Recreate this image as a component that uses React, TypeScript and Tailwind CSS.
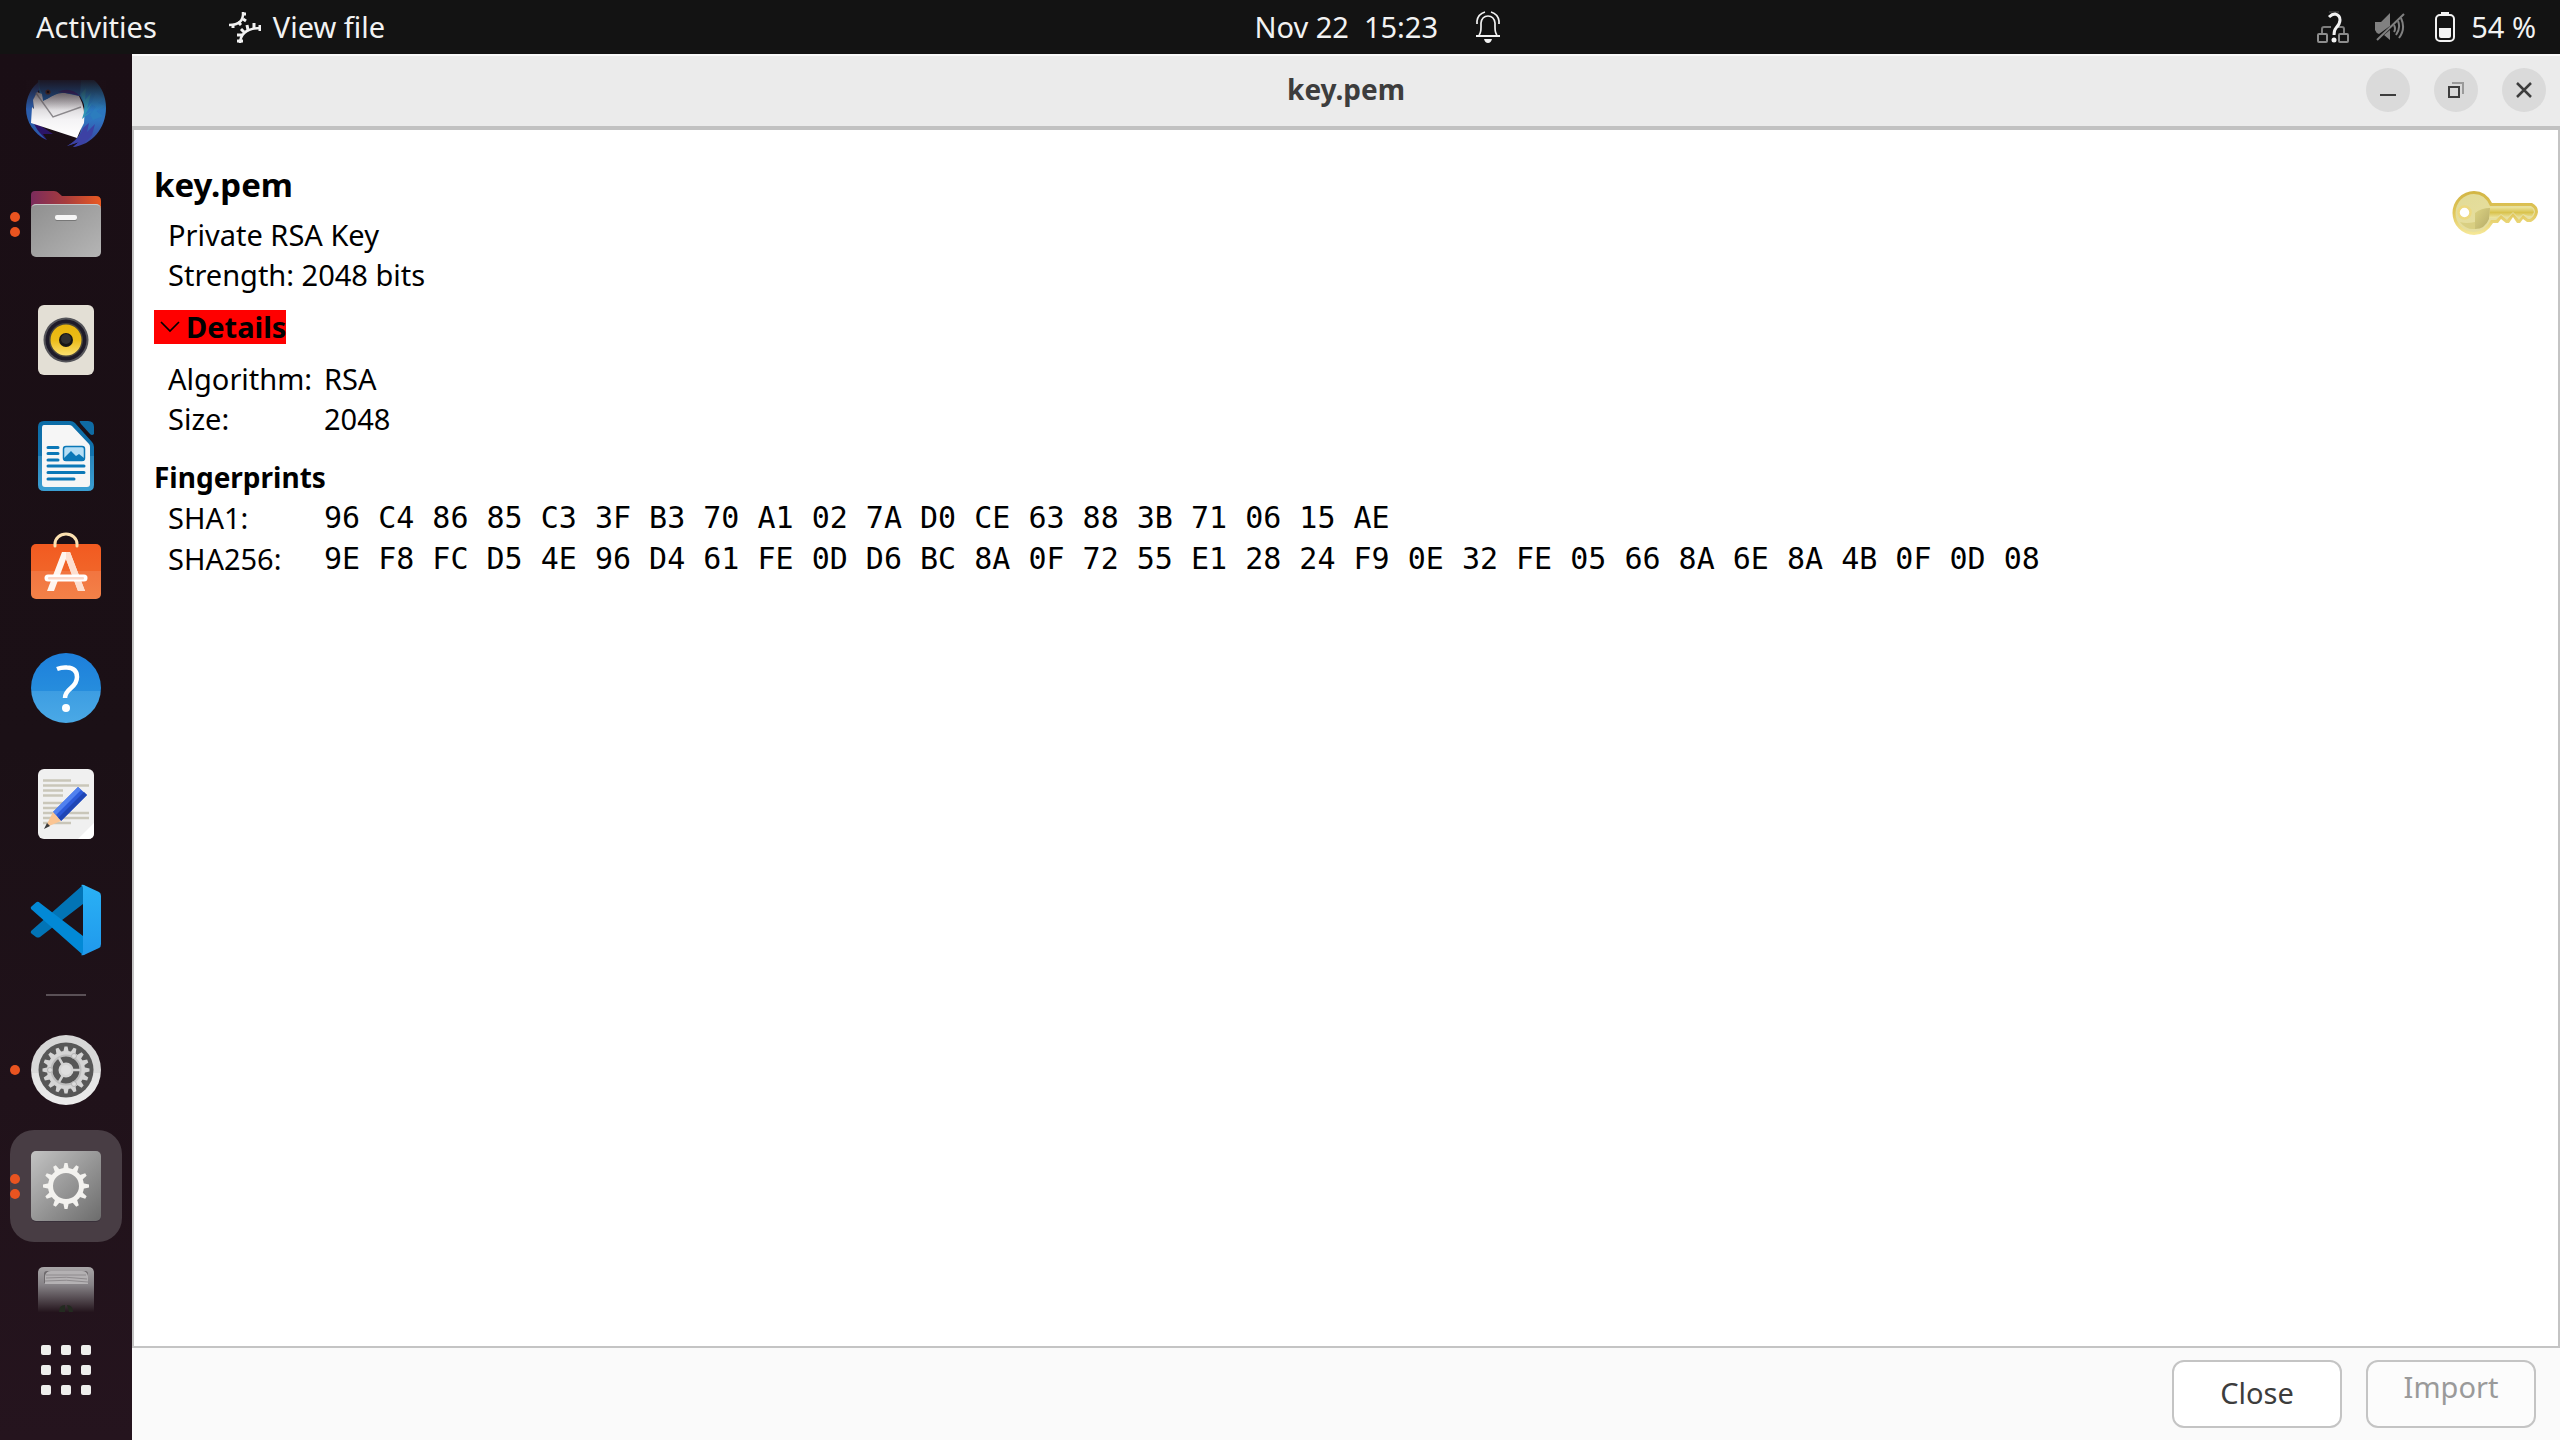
import type { ReactNode } from "react";

interface DockItemProps {
  label: string;
  windows?: number;
  active?: boolean;
  children: ReactNode;
}

interface DetailRow {
  label: string;
  value: string;
}

const details: DetailRow[] = [
  { label: "Algorithm:", value: "RSA" },
  { label: "Size:", value: "2048" },
];

const fingerprints: DetailRow[] = [
  {
    label: "SHA1:",
    value: "96 C4 86 85 C3 3F B3 70 A1 02 7A D0 CE 63 88 3B 71 06 15 AE",
  },
  {
    label: "SHA256:",
    value:
      "9E F8 FC D5 4E 96 D4 61 FE 0D D6 BC 8A 0F 72 55 E1 28 24 F9 0E 32 FE 05 66 8A 6E 8A 4B 0F 0D 08",
  },
];

function DockItem({ label, windows = 0, active, children }: DockItemProps) {
  return (
    <li className="relative flex h-[116px] items-center justify-center">
      <button
        type="button"
        aria-label={label}
        className={`flex size-28 items-center justify-center rounded-3xl ${
          active ? "bg-[#483d44]" : ""
        }`}
      >
        {children}
      </button>
      {windows > 0 && (
        <span className="absolute inset-y-0 left-[10px] flex flex-col justify-center gap-[5px]">
          {Array.from({ length: windows }, (_, i) => (
            <span key={i} className="size-[10px] rounded-full bg-[#e95420]" />
          ))}
        </span>
      )}
    </li>
  );
}

function Teeth({ count, inner, outer, width, fill }: {
  count: number;
  inner: number;
  outer: number;
  width: number;
  fill: string;
}) {
  const half = width / 2;
  return (
    <g fill={fill}>
      {Array.from({ length: count }, (_, i) => (
        <path
          key={i}
          d={`M${40 - half - 1} ${40 - inner} L${40 - half + 0.5} ${40 - outer} H${40 + half - 0.5} L${40 + half + 1} ${40 - inner} Z`}
          transform={`rotate(${(360 / count) * i} 40 40)`}
        />
      ))}
    </g>
  );
}

function MailIcon() {
  return (
    <svg viewBox="0 0 80 80" className="size-20">
      <defs>
        <linearGradient id="mail-wing" x1="0" y1="0" x2="0" y2="1">
          <stop offset="0" stopColor="#1f7fb8" />
          <stop offset="0.6" stopColor="#2f74c0" />
          <stop offset="1" stopColor="#3a3f9e" />
        </linearGradient>
        <linearGradient id="mail-paper" x1="0" y1="0" x2="0" y2="1">
          <stop offset="0" stopColor="#b9b5b9" />
          <stop offset="0.6" stopColor="#f4f3f5" />
          <stop offset="1" stopColor="#ffffff" />
        </linearGradient>
        <linearGradient id="mail-fade" x1="0" y1="12" x2="0" y2="42" gradientUnits="userSpaceOnUse">
          <stop offset="0" stopColor="#1b0f16" stopOpacity="0.9" />
          <stop offset="1" stopColor="#1b0f16" stopOpacity="0" />
        </linearGradient>
        <clipPath id="mail-clip">
          <rect y="12" width="80" height="68" />
        </clipPath>
      </defs>
      <g clipPath="url(#mail-clip)">
        <path d="M5 55 C8 64 14 70 21 72 L17 66 L27 66 L9 54 Z" fill="#2b1468" />
        <path d="M15 12 C5 19 0 29 0 41 C0 54 8 66 21 72 C13 65 8 58 7 52 L8 30 L18 14 Z" fill="#2a5cab" />
        <path
          d="M12 12 H68 C76 19 80 29 80 40 C80 60 66 77 47 79 L53 74 L41 78 C48 74 52 70 54 65 L60 40 L54 28 L14 30 Z"
          fill="url(#mail-wing)"
        />
        <path d="M57 60 L63 55 L61 64 L69 56 L66 67 C61 74 53 78 47 79 L53 74 L41 78 C49 74 54 68 57 60 Z" fill="#3c41a4" />
        <path d="M11 24 L16 26 L18 32 L34 24 L53 28 Q60 41 58 55 L54 63 L51 70 L5 55 L6 39 L8 41 L7 32 Z" fill="url(#mail-paper)" />
        <path d="M10 25 L27 49 L55 39" fill="none" stroke="#8b888c" strokeWidth="1.4" />
        <path d="M14 12 H55 L54 28 C47 25 41 25 36 25 C27 26 24 30 17 33 L16 25 C13 21 13 16 14 12 Z" fill="#1f5899" />
        <path d="M32 24 Q44 18 54 28 Q44 25 32 24 Z" fill="#3b2c82" />
        <path d="M55 26 L60 20 L59 32 L65 25 L61 41 L67 33 L59 47 L66 43 L56 51 Q61 40 55 26 Z" fill="#2f93b4" />
        <path d="M70 24 L78 31 L72 35 L79 38 L70 43 L77 48 L67 52 L64 47 L70 39 L65 36 Z" fill="#2c80bd" opacity="0.7" />
        <circle cx="22" cy="24" r="2.6" fill="#5a3429" />
        <circle cx="22" cy="24" r="1.3" fill="#0b0a12" />
        <rect y="12" width="80" height="32" fill="url(#mail-fade)" />
      </g>
    </svg>
  );
}

function FilesIcon() {
  return (
    <svg viewBox="0 0 80 80" className="size-20">
      <defs>
        <linearGradient id="files-back" x1="0" y1="0" x2="1" y2="0">
          <stop offset="0" stopColor="#7b2b5c" />
          <stop offset="0.5" stopColor="#a83c3c" />
          <stop offset="1" stopColor="#ea5a22" />
        </linearGradient>
        <linearGradient id="files-front" x1="0" y1="0" x2="1" y2="1">
          <stop offset="0" stopColor="#8f8f8f" />
          <stop offset="1" stopColor="#b5b5b5" />
        </linearGradient>
      </defs>
      <path d="M5 11 Q5 7 9 7 H28 Q31 7 32 8.500 L36 12 H70 Q75 12 75 17 V40 H5 Z" fill="url(#files-back)" />
      <rect x="5" y="20" width="70" height="53" rx="5" fill="url(#files-front)" />
      <path d="M6 22.500 Q7 20.500 10 20.500 H70 Q73 20.500 74 22.500" fill="none" stroke="#c8c8c8" />
      <rect x="29" y="32" width="22" height="5" rx="2" fill="#777" />
      <rect x="29" y="31" width="22" height="5" rx="2" fill="#f6f6f6" />
    </svg>
  );
}

function MusicIcon() {
  return (
    <svg viewBox="0 0 80 80" className="size-20">
      <defs>
        <linearGradient id="music-cone" x1="0" y1="0" x2="0" y2="1">
          <stop offset="0" stopColor="#e8b50c" />
          <stop offset="0.5" stopColor="#ecbc18" />
          <stop offset="1" stopColor="#fbe070" />
        </linearGradient>
      </defs>
      <rect x="12" y="5" width="56" height="70" rx="6" fill="#e3dfd5" />
      <circle cx="40" cy="40" r="22.500" fill="#55555a" />
      <circle cx="40" cy="40" r="20.500" fill="#1e1b29" />
      <circle cx="40" cy="40" r="17" fill="#47443c" />
      <circle cx="40" cy="40" r="15.500" fill="url(#music-cone)" />
      <circle cx="40" cy="40" r="7" fill="#161616" />
      <circle cx="40" cy="39" r="5" fill="#303030" />
    </svg>
  );
}

function WriterIcon() {
  return (
    <svg viewBox="0 0 80 80" className="size-20">
      <defs>
        <linearGradient id="writer-frame" x1="0" y1="0" x2="0" y2="1">
          <stop offset="0" stopColor="#0c6ca6" />
          <stop offset="0.5" stopColor="#1273ae" />
          <stop offset="0.5" stopColor="#2a86bb" />
          <stop offset="1" stopColor="#3b9fd3" />
        </linearGradient>
      </defs>
      <path d="M18 5 H44 Q47 5 49 7 L66 26 Q68 28 68 31 V69 Q68 75 62 75 H18 Q12 75 12 69 V11 Q12 5 18 5 Z" fill="url(#writer-frame)" />
      <path d="M18 9 H43 Q45 9 46 10 L63 28 Q64 29 64 31 V68 Q64 71 61 71 H19 Q16 71 16 68 V12 Q16 9 18 9 Z" fill="#f6f6f6" />
      <path d="M54 5 H62 Q68 5 68 11 V18 Q66 20 64 18 L55 8 Q53 5 54 5 Z" fill="#0f6ba3" />
      <path d="M22 31.500 H32 M22 37.500 H32 M22 44 H32 M22 50 H58 M22 56.500 H58 M22 63 H48" stroke="#0b78b7" strokeWidth="3" strokeLinecap="round" />
      <rect x="37.500" y="30.500" width="21" height="14" rx="2.500" fill="#b5def5" stroke="#0b78b7" strokeWidth="1.500" />
      <path d="M38 42 L45 35 L50 40 L53 38 L58 42 V45 H38 Z" fill="#0b78b7" />
    </svg>
  );
}

function SoftwareIcon() {
  return (
    <svg viewBox="0 0 80 80" className="size-20">
      <defs>
        <linearGradient id="software-bag" x1="0" y1="0" x2="0" y2="1">
          <stop offset="0" stopColor="#f25a20" />
          <stop offset="0.5" stopColor="#f16529" />
          <stop offset="0.5" stopColor="#f27540" />
          <stop offset="1" stopColor="#f38148" />
        </linearGradient>
      </defs>
      <rect x="5" y="12" width="70" height="55" rx="5" fill="url(#software-bag)" />
      <path d="M29 14 V12 A11 10 0 0 1 51 12 V14" fill="none" stroke="#fbe0b0" strokeWidth="3" strokeLinecap="round" />
      <path d="M36 20 H44 L59 59 H52 L40 27 L28 59 H21 Z" fill="#fff5ef" />
      <path d="M40 20 H44 L59 59 H52 L40 27 Z" fill="#fddfd0" />
      <rect x="18.500" y="42.500" width="43" height="7" rx="3.500" fill="#fff" />
      <rect x="22" y="45" width="36" height="2.500" rx="1" fill="#fbd8ca" />
    </svg>
  );
}

function HelpIcon() {
  return (
    <svg viewBox="0 0 80 80" className="size-20">
      <defs>
        <linearGradient id="help-disc" x1="0" y1="0" x2="0" y2="1">
          <stop offset="0" stopColor="#1d7fdb" />
          <stop offset="0.54" stopColor="#268ddd" />
          <stop offset="0.54" stopColor="#3d9de2" />
          <stop offset="1" stopColor="#4aa9e6" />
        </linearGradient>
      </defs>
      <circle cx="40" cy="40" r="35" fill="url(#help-disc)" />
      <path d="M31 21 Q36 19 41 19.500 Q51 20 51 29 Q51 35 45 40 Q39 45 39 50" fill="none" stroke="#fff" strokeWidth="4.500" />
      <circle cx="40" cy="60" r="4" fill="#fff" />
    </svg>
  );
}

function EditorIcon() {
  return (
    <svg viewBox="0 0 80 80" className="size-20">
      <rect x="12" y="5" width="56" height="70" rx="6" fill="#f0f0f0" />
      <path d="M52 75 L68 59 V69 Q68 75 62 75 Z" fill="#fff" />
      <path d="M17 16.500 H45 M17 21.500 H63 M17 26.500 H37 M17 31.500 H37 M17 39 H43 M17 44 H37 M17 49 H63 M17 54 H63 M17 59 H45" stroke="#c9c6b9" strokeWidth="2.500" />
      <path d="M27 48 L52 23 L61 31 L35 57 Z" fill="#2b59d8" />
      <path d="M27 48 L52 23 L55 26 L30 51 Z" fill="#5181ef" />
      <path d="M32 54 L58 28 L61 31 L35 57 Z" fill="#1f46b5" />
      <path d="M27 48 L35 57 L23 62 L21 60 Z" fill="#fbc593" />
      <path d="M21 59 L24 62 L18 65 Z" fill="#3b3b3b" />
    </svg>
  );
}

function CodeIcon() {
  return (
    <svg viewBox="0 0 80 80" className="size-20">
      <defs>
        <linearGradient id="code-side" x1="0" y1="0" x2="0" y2="1">
          <stop offset="0" stopColor="#2ab1f5" />
          <stop offset="1" stopColor="#2099ec" />
        </linearGradient>
      </defs>
      <path d="M57 5 L5 51 Q4 53 6 54 L10 57 Q12 58 14 57 L57 24 Z" fill="#0274b6" />
      <path d="M57 75 L5 29 Q4 27 6 26 L10 22.500 Q12 21 14 23 L57 56 Z" fill="#0289d6" />
      <path d="M55 5 Q57 4 60 6 L73 12 Q75 13 75 16 V64 Q75 67 73 68 L60 74 Q57 76 55 75 Q57 74 57 72 V8 Q57 6 55 5 Z" fill="url(#code-side)" />
    </svg>
  );
}

function SettingsIcon() {
  return (
    <svg viewBox="0 0 80 80" className="size-20">
      <defs>
        <linearGradient id="settings-ring" x1="0" y1="0" x2="0" y2="1">
          <stop offset="0" stopColor="#d6d6d6" />
          <stop offset="0.55" stopColor="#d9d9d9" />
          <stop offset="0.55" stopColor="#e4e4e4" />
          <stop offset="1" stopColor="#ececec" />
        </linearGradient>
      </defs>
      <circle cx="40" cy="40" r="35" fill="url(#settings-ring)" />
      <circle cx="40" cy="40" r="27.500" fill="#575757" />
      <Teeth count={16} inner={17} outer={23.5} width={4} fill="#d4d4d4" />
      <circle cx="40" cy="40" r="16.500" fill="none" stroke="#d4d4d4" strokeWidth="5" />
      <circle cx="40" cy="40" r="14.500" fill="none" stroke="#bdbdbd" strokeWidth="2" />
      <path d="M40 40 H54 M40 40 L33 28 M40 40 L33 52" stroke="#d0d0d0" strokeWidth="2.500" />
      <circle cx="40" cy="40" r="7.500" fill="#d4d4d4" />
      <circle cx="40" cy="40" r="5" fill="#dedede" />
      <g fill="#dcdcdc" stroke="#b4b4b4">
        <circle cx="24" cy="40" r="2.500" />
        <circle cx="48" cy="26" r="2.500" />
        <circle cx="48" cy="54" r="2.500" />
      </g>
    </svg>
  );
}

function ViewerIcon() {
  return (
    <svg viewBox="0 0 80 80" className="size-20">
      <defs>
        <linearGradient id="viewer-tile" x1="0" y1="0" x2="1" y2="1">
          <stop offset="0" stopColor="#c3c3c3" />
          <stop offset="1" stopColor="#6c6c6c" />
        </linearGradient>
      </defs>
      <rect x="5" y="6" width="70" height="70" rx="5" fill="#39303a" />
      <rect x="5" y="5" width="70" height="70" rx="5" fill="url(#viewer-tile)" />
      <Teeth count={12} inner={16} outer={23} width={4} fill="#f3f2ef" />
      <circle cx="40" cy="40" r="15.500" fill="none" stroke="#f3f2ef" strokeWidth="5" />
    </svg>
  );
}

function TrashIcon() {
  return (
    <svg viewBox="0 0 80 80" className="size-20">
      <defs>
        <linearGradient id="trash-body" x1="0" y1="5" x2="0" y2="50" gradientUnits="userSpaceOnUse">
          <stop offset="0" stopColor="#a9a6a8" />
          <stop offset="0.4" stopColor="#868286" />
          <stop offset="1" stopColor="#24151d" />
        </linearGradient>
      </defs>
      <path d="M12 50 V11 Q12 5 18 5 H62 Q68 5 68 11 V50 Z" fill="url(#trash-body)" />
      <path d="M18 21 V12 Q18 9 21 9 H59 Q62 9 62 12 V21 Z" fill="#6d696c" />
      <path d="M19 22 V14 Q20 9 25 9 H56 Q61 9 62 14 V22 Z" fill="#b4b1b3" />
      <path d="M20 13 H60 M20 16 Q40 14 61 17 M19 19 Q40 17 62 20" fill="none" stroke="#8e8a8d" />
      <path d="M33 50 Q33 43 39 43 L39 50 Z M41 43 Q47 43 47 50 H43 Z" fill="#232a20" />
    </svg>
  );
}

function GearsIcon() {
  return (
    <svg viewBox="0 0 32 32" className="size-8" fill="none" stroke="#f2f2f2">
      <path d="M14 1 Q15 14 0 14" strokeWidth="2.500" />
      <path d="M14 3 H17 M14 8 L17 10 M9 11 L12 14 M4 13 V17" strokeWidth="3" />
      <path d="M11 32 Q12 17 32 17" strokeWidth="2.500" />
      <path d="M8 30 H14 M8 24 H13 M12 18 L15 21 M18 14 L19 19 M25 12 V18 M31 14 V20" strokeWidth="3" />
    </svg>
  );
}

function BellIcon() {
  return (
    <svg viewBox="0 0 24 32" className="h-8 w-6" fill="none" stroke="#f2f2f2" strokeWidth="1.700">
      <path d="M1 13 V10 Q2 3 9 1 M23 13 V10 Q22 3 15 1" />
      <path d="M3 24 Q5 22 5 16 V12 Q6 5 12 5 Q18 5 19 12 V16 Q19 22 21 24" />
      <path d="M0 25 H24" strokeWidth="2" />
      <path d="M8 28 H16 Q15 32 12 32 Q9 32 8 28 Z" fill="#f2f2f2" stroke="none" />
    </svg>
  );
}

function NetworkIcon() {
  return (
    <svg viewBox="0 0 32 32" className="size-8" fill="none">
      <path d="M5 22 V18 Q5 16 7 16 H14 M20 16 H25 Q27 16 27 18 V22" stroke="#7d7d7d" strokeWidth="2" />
      <rect x="1" y="23" width="9" height="8" rx="1" stroke="#8d8d8d" strokeWidth="2" />
      <rect x="22" y="23" width="9" height="8" rx="1" stroke="#8d8d8d" strokeWidth="2" />
      <path d="M12 1 H22" stroke="#555" />
      <path d="M12 6 Q15 3 18 3 Q23 4 23 9 Q23 13 19 17 Q17 19 17 24" stroke="#f2f2f2" strokeWidth="3" />
      <circle cx="17" cy="29" r="2.500" fill="#f2f2f2" />
    </svg>
  );
}

function MutedIcon() {
  return (
    <svg viewBox="0 0 30 30" className="size-[30px]" fill="none" stroke="#808080" strokeWidth="2">
      <path d="M0 10 H6 L15 1 V14 L4 22 Q1 21 0 18 Z M9 23 L15 18 V28 Z" fill="#808080" stroke="none" />
      <path d="M2 28 L29 2" />
      <path d="M19 13 Q21 17 19 20 M23 9 Q26 16 21 23 M26 6 Q31 17 24 26" />
    </svg>
  );
}

function BatteryIcon() {
  return (
    <svg viewBox="0 0 20 30" className="h-[30px] w-5">
      <path d="M6 0 H14 V3 H6 Z" fill="#f2f2f2" />
      <rect x="1" y="3" width="18" height="26" rx="4" fill="none" stroke="#f2f2f2" strokeWidth="2" />
      <path d="M4 16 H16 V24 Q16 26 14 26 H6 Q4 26 4 24 Z" fill="#f2f2f2" />
    </svg>
  );
}

function KeyIcon() {
  return (
    <svg viewBox="0 0 86 44" className="h-11 w-[86px] shrink-0" role="img" aria-label="Key">
      <defs>
        <linearGradient id="key-edge" x1="0" y1="0" x2="0" y2="1">
          <stop offset="0" stopColor="#d2b544" />
          <stop offset="0.5" stopColor="#e0c65a" />
          <stop offset="1" stopColor="#f6e99b" />
        </linearGradient>
        <linearGradient id="key-shaft" x1="0" y1="0" x2="0" y2="1">
          <stop offset="0" stopColor="#ece49c" />
          <stop offset="0.5" stopColor="#d9c34e" />
          <stop offset="1" stopColor="#ede6a4" />
        </linearGradient>
        <linearGradient id="key-bow" x1="0" y1="0" x2="1" y2="1">
          <stop offset="0" stopColor="#e2db96" />
          <stop offset="1" stopColor="#e9e1a6" />
        </linearGradient>
        <linearGradient id="key-shade" x1="0" y1="0" x2="1" y2="1">
          <stop offset="0" stopColor="#dcd383" />
          <stop offset="1" stopColor="#b6ab68" />
        </linearGradient>
      </defs>
      <path
        d="M40 12 H80 Q86 15 86 21 Q85 28 79 31 H75 L71 28 L68 32 H65 L61 26 L57 32 H54 L49 28 L46 32 H41 Q34 44 22 44 A21.500 22 0 0 1 22 0 Q34 0 40 12 Z"
        fill="url(#key-edge)"
      />
      <path
        d="M38 15 H79 Q83 17 83 21 Q82 26 78 28 H76 L71 24 L67 29 L61 22 L55 29 L49 24 L44 29 H39 Q33 41 22 41 A18.500 19 0 0 1 22 3 Q33 3 38 15 Z"
        fill="url(#key-bow)"
      />
      <path d="M38 16 H79 Q82 18 82 21 L80 25 H76 L71 23 L67 27 L61 21 L55 27 L49 23 L44 27 H37 Z" fill="url(#key-shaft)" />
      <path d="M23 22 Q29 17 38 17 L37 28 Q33 38 23 38 Z" fill="url(#key-shade)" />
      <path d="M8 31 Q14 39 23 38 V31 Q14 33 8 31 Z" fill="#d9cf82" />
      <circle cx="12.500" cy="21.500" r="6" fill="#fff" stroke="#edd980" strokeWidth="2.500" />
    </svg>
  );
}

function TopBar() {
  return (
    <header className="flex h-[54px] shrink-0 items-center bg-[#131313] text-[29px] leading-[54px] text-[#f2f2f2]">
      <div className="flex w-[49%] items-center pl-9">
        <button type="button">Activities</button>
        <button type="button" className="ml-[72px] flex items-center gap-3">
          <GearsIcon />
          View file
        </button>
      </div>
      <button type="button" className="flex items-center gap-[38px] whitespace-pre">
        {"Nov 22  15:23"}
        <BellIcon />
      </button>
      <button type="button" aria-label="System menu" className="ml-auto flex items-center pr-6">
        <NetworkIcon />
        <span className="ml-[26px]">
          <MutedIcon />
        </span>
        <span className="ml-[30px]">
          <BatteryIcon />
        </span>
        <span className="ml-4">54 %</span>
      </button>
    </header>
  );
}

function Dock() {
  return (
    <nav aria-label="Dock" className="flex w-[132px] shrink-0 flex-col bg-linear-to-b from-[#1a0e15] via-[#1b1016] to-[#25141e]">
      <ul>
        <li className="flex h-28 items-center justify-center pb-1">
          <button type="button" aria-label="Thunderbird">
            <MailIcon />
          </button>
        </li>
        <DockItem label="Files" windows={2}><FilesIcon /></DockItem>
        <DockItem label="Rhythmbox"><MusicIcon /></DockItem>
        <DockItem label="LibreOffice Writer"><WriterIcon /></DockItem>
        <DockItem label="Ubuntu Software"><SoftwareIcon /></DockItem>
        <DockItem label="Help"><HelpIcon /></DockItem>
        <DockItem label="Text Editor"><EditorIcon /></DockItem>
        <DockItem label="Visual Studio Code"><CodeIcon /></DockItem>
        <li aria-hidden="true" className="flex h-[34px] items-center justify-center">
          <span className="h-0.5 w-10 bg-[#5a5056]" />
        </li>
        <DockItem label="Settings" windows={1}><SettingsIcon /></DockItem>
        <DockItem label="View file" windows={2} active><ViewerIcon /></DockItem>
        <li className="flex h-[68px] justify-center overflow-hidden pt-[18px]">
          <button type="button" aria-label="Trash" className="self-start">
            <TrashIcon />
          </button>
        </li>
      </ul>
      <button type="button" aria-label="Show Applications" className="mx-auto mt-[33px] grid grid-cols-3 gap-[10px]">
        {Array.from({ length: 9 }, (_, i) => (
          <span key={i} className="size-[10px] rounded-[2px] bg-[#eeeeec]" />
        ))}
      </button>
    </nav>
  );
}

function TitleBar() {
  const control = "flex size-11 items-center justify-center rounded-full bg-[#dadada]";
  return (
    <div className="grid h-[76px] shrink-0 grid-cols-[1fr_auto_1fr] items-center border-t-2 border-b-4 border-t-[#fafafa] border-b-[#c1c1c1] bg-[#ebebeb] pb-0.5">
      <h1 className="col-start-2 pb-0.5 text-[28px] font-bold text-[#3d3d3d]">key.pem</h1>
      <div className="flex justify-end gap-6 pr-[14px]">
        <button type="button" aria-label="Minimize" className={control}>
          <svg viewBox="0 0 16 16" className="size-4">
            <path d="M0 13 H16" stroke="#3d3d3d" strokeWidth="2" />
          </svg>
        </button>
        <button type="button" aria-label="Restore" className={control}>
          <svg viewBox="0 0 16 16" className="size-4" fill="none" strokeWidth="2">
            <path d="M4 1 H15 V12" stroke="#9a9a9a" />
            <rect x="1" y="5" width="10" height="10" stroke="#3d3d3d" />
          </svg>
        </button>
        <button type="button" aria-label="Close window" className={control}>
          <svg viewBox="0 0 16 16" className="size-4">
            <path d="M1 1 L15 15 M15 1 L1 15" stroke="#3d3d3d" strokeWidth="2.500" />
          </svg>
        </button>
      </div>
    </div>
  );
}

function KeyDetails() {
  return (
    <main className="flex grow items-start justify-between border-x-2 border-b-2 border-[#c4c4c4] bg-white pr-5 pl-5 text-[29px] leading-10 text-black">
      <div className="pt-[31px]">
        <h2 className="text-[33px] leading-[48px] font-bold">key.pem</h2>
        <div className="mt-[6px] pl-[14px]">
          <p>Private RSA Key</p>
          <p>Strength: 2048 bits</p>
        </div>
        <button
          type="button"
          aria-expanded="true"
          className="mt-[15px] flex items-center gap-[6px] bg-[#ff0000] pl-[6px] leading-[34px] font-bold"
        >
          <svg viewBox="0 0 20 12" className="h-3 w-5" fill="none">
            <path d="M1 1 L10 10 L19 1" stroke="#000" strokeWidth="1.700" />
          </svg>
          Details
        </button>
        <dl className="mt-[15px] grid grid-cols-[156px_auto] pl-[14px]">
          {details.map((row) => (
            <div key={row.label} className="contents">
              <dt>{row.label}</dt>
              <dd>{row.value}</dd>
            </div>
          ))}
        </dl>
        <h3 className="mt-[18px] text-[28px] font-bold">Fingerprints</h3>
        <dl className="grid grid-cols-[156px_auto] pl-[14px] leading-[41px]">
          {fingerprints.map((row) => (
            <div key={row.label} className="contents">
              <dt>{row.label}</dt>
              <dd className="font-['DejaVu_Sans_Mono',monospace] text-[30px]">{row.value}</dd>
            </div>
          ))}
        </dl>
      </div>
      <div className="pt-[61px]">
        <KeyIcon />
      </div>
    </main>
  );
}

export default function App() {
  return (
    <div className="flex min-h-screen flex-col font-['Noto_Sans',sans-serif]">
      <TopBar />
      <div className="flex grow">
        <Dock />
        <div className="flex min-w-0 grow flex-col">
          <TitleBar />
          <KeyDetails />
          <footer className="flex shrink-0 justify-end gap-6 bg-[#fafafa] px-6 py-3 text-[29px]">
            <button
              type="button"
              className="h-[68px] w-[170px] rounded-xl border-2 border-[#c4c4c4] bg-white pb-0.5 text-[#3d3d3d]"
            >
              Close
            </button>
            <button
              type="button"
              disabled
              className="h-[68px] w-[170px] rounded-xl border-2 border-[#c4c4c4] bg-[#fcfcfc] pb-[14px] text-[#9a9a9a]"
            >
              Import
            </button>
          </footer>
        </div>
      </div>
    </div>
  );
}
